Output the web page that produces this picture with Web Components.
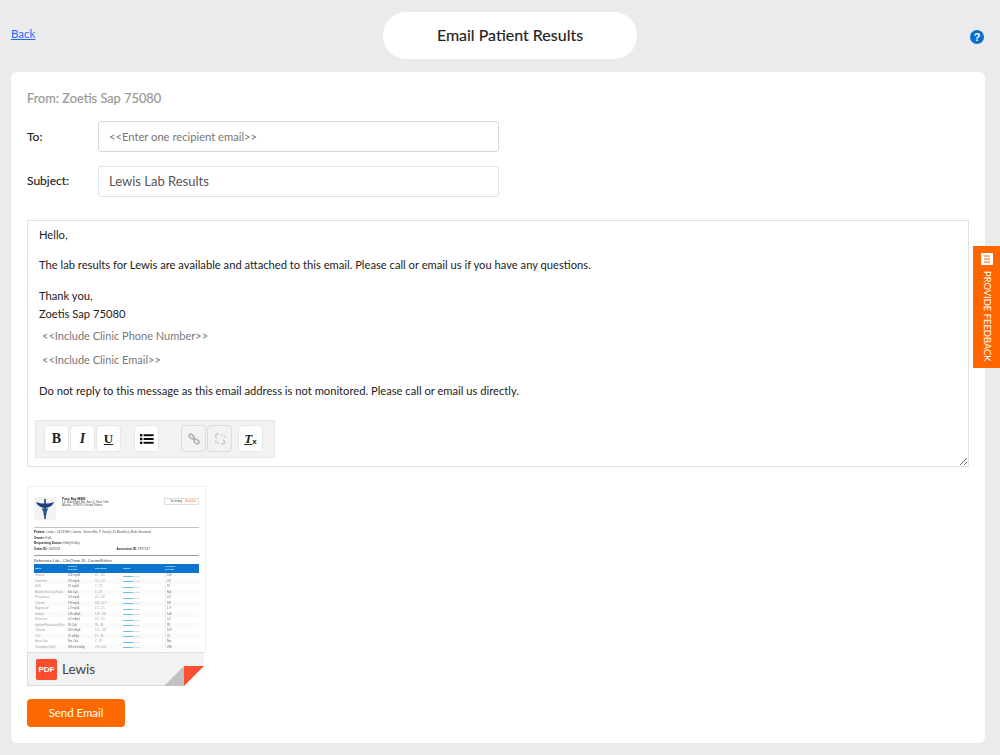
<!DOCTYPE html>
<html lang="en"><head><meta charset="utf-8"><title>Email Patient Results</title>
<style>
html,body{margin:0;padding:0;background:#ebebed;height:755px;overflow:hidden}
body{font:12px/18px Lato,"Open Sans",sans-serif;color:#222}
</style></head><body>
<email-page></email-page>
<script>
function def(name, css, html){
  customElements.define(name, class extends HTMLElement{
    constructor(){super();const s=this.attachShadow({mode:'open'});s.innerHTML='<style>'+css+'</style>'+html;}
  });
}
def('page-header',`
:host{display:grid;grid-template-columns:372px 254px 1fr;height:72px;box-sizing:border-box;padding:12px 16px 13px 11px;align-items:center}
a{color:#1a6dff;font-size:11.500px;text-decoration:underline;margin-top:-3px;justify-self:start}
.t{height:47px;border-radius:23px;background:#fff;display:flex;align-items:center;justify-content:center;font-size:16px;color:#222;-webkit-text-stroke:.15px #222;padding-bottom:2px;box-sizing:border-box}
.r{display:flex;justify-content:flex-end;margin-top:2px}
`,`<a href="#">Back</a><div class="t">Email Patient Results</div><div class="r"><svg width="14" height="14" viewBox="0 0 14 14"><circle cx="7" cy="7" r="7" fill="#0a6ecb"/><text x="7" y="11" text-anchor="middle" font-family="Liberation Sans" font-weight="700" font-size="11" fill="#fff">?</text></svg></div>`);

def('field-row',`
:host{display:flex;align-items:center;height:31px}
.l{width:71px;font-size:12px;color:#222;-webkit-text-stroke:.15px #222;padding-bottom:var(--pb,0)}
.b{width:401px;height:31px;box-sizing:border-box;border:1px solid var(--bc,#d4d7dc);border-radius:3px;padding:0 10px var(--pb,0);display:flex;align-items:center;background:#fff;color:var(--c,#777);font-size:var(--f,11.200px)}
`,`<div class="l"><slot name="label"></slot></div><div class="b"><slot></slot></div>`);

def('tool-btn',`
:host{display:flex;width:25px;height:27px;box-sizing:border-box;align-items:center;justify-content:center;background:#fff;border:1px solid #e6e6e6;border-radius:4px;font:700 14px "Liberation Serif",serif;color:#222}
:host([off]){background:#f2f2f2;border-color:#dcdcdc}
`,`<slot></slot>`);

def('rich-toolbar',`
:host{display:flex;width:240px;height:38px;box-sizing:border-box;background:#f2f2f2;border:1px solid #e6e6e6;padding:4px 0 0 8px;align-items:flex-start}
tool-btn+tool-btn{margin-left:1px}
.g1{margin-left:13px}.g2{margin-left:22px}.g3{margin-left:6px}
`,`<tool-btn>B</tool-btn><tool-btn style="font-style:italic">I</tool-btn><tool-btn style="text-decoration:underline;font-size:13px">U</tool-btn>
<tool-btn class="g1"><svg width="14" height="12" viewBox="0 0 14 12"><g fill="#111"><rect x="0" y="1" width="2.4" height="2.4"/><rect x="0" y="4.8" width="2.4" height="2.4"/><rect x="0" y="8.6" width="2.4" height="2.4"/><rect x="3.6" y="1.2" width="10" height="2"/><rect x="3.6" y="5" width="10" height="2"/><rect x="3.6" y="8.8" width="10" height="2"/></g></svg></tool-btn>
<tool-btn off class="g2"><svg width="12" height="12" viewBox="0 0 12 12" fill="none" stroke="#adadad" stroke-width="1.400"><rect x="0.800" y="1.800" width="5.400" height="3.400" rx="1.700" transform="rotate(40 3.500 3.500)"/><rect x="5.800" y="6.800" width="5.400" height="3.400" rx="1.700" transform="rotate(40 8.500 8.500)"/><path d="M5.200 5.200l1.600 1.600"/></svg></tool-btn>
<tool-btn off><svg width="12" height="12" viewBox="0 0 12 12" fill="none" stroke="#c4c4c4" stroke-width="1.300"><path d="M5 1.200H3.200A1.900 1.900 0 0 0 2.200 4.600l1 .7"/><path d="M7 10.800h1.800a1.900 1.900 0 0 0 1-3.400l-1-.7"/><path d="M8 1v1.800M10 3.500h1.500M.8 8.500h1.800M4 11V9.200"/></svg></tool-btn>
<tool-btn class="g3" style="font-size:13px;font-style:italic"><span style="text-decoration:underline;line-height:1">T</span><span style="font-size:8px;margin-top:6px;font-family:'Liberation Sans';font-style:normal">x</span></tool-btn>`);

def('mail-editor',`
:host{display:block;width:942px;height:247px;box-sizing:border-box;border:1px solid #e2e2e2;padding:5px 11px 0;margin-top:23px;font-size:11.200px;line-height:18px;color:#222;resize:both;overflow:auto;position:relative}
p{margin:0}
.ph{color:#777;padding-left:3px;font-size:11px}
rich-toolbar{margin:20px 0 0 -4px}
`,`<p>Hello,</p>
<p style="margin-top:12px">The lab results for Lewis are available and attached to this email. Please call or email us if you have any questions.</p>
<p style="margin-top:13px">Thank you,</p>
<p>Zoetis Sap 75080</p>
<p class="ph" style="margin-top:4px">&lt;&lt;Include Clinic Phone Number&gt;&gt;</p>
<p class="ph" style="margin-top:6px">&lt;&lt;Include Clinic Email&gt;&gt;</p>
<p style="margin-top:13px">Do not reply to this message as this email address is not monitored. Please call or email us directly.</p>
<rich-toolbar></rich-toolbar>`);

const rows=[['Glucose','108 mg/dL','65 - 120'],['Creatinine','0.9 mg/dL','0.5 - 1.5'],['BUN','19 mg/dL','7 - 27'],['Blood Urea/Creat Ratio','Not Calc','0 - 28'],['Phosphorus','4.3 mg/dL','2.5 - 6.8'],['Calcium','9.8 mg/dL','8.8 - 11.9'],['Magnesium','1.9 mg/dL','1.5 - 2.5'],['Sodium','146 mEq/L','139 - 154'],['Potassium','4.2 mEq/L','3.6 - 5.5'],['Sodium/Potassium Ratio','35 Calc','28 - 38'],['Chloride','109 mEq/L','102 - 120'],['CO2','22 mEq/L','15 - 28'],['Anion Gap','Not Calc','7 - 29'],['Osmolality (Calc)','296 mOsm/kg','270 - 310']];
def('report-thumb',`
:host{display:block;width:179px;height:166px;box-sizing:border-box;border:1px solid #eee;border-bottom:0;padding:0 6px 0 6px;overflow:hidden;font-size:3px;line-height:3.400px;color:#555;background:#fff;font-family:"Liberation Sans",sans-serif}
.top{display:flex;height:39.500px;padding-top:10px;box-sizing:border-box}
.logo{width:22px;height:23px;background:#f3f3f3;display:flex;justify-content:center;align-items:center;margin-right:6px;flex:none}
.ad{flex:1;padding-top:.5px}.ad b{color:#222}
.st{width:35px;height:6.500px;border:1px solid #ddd;display:flex;align-items:center;justify-content:flex-end;gap:3px;padding-right:2px;margin-top:1px;box-sizing:border-box;white-space:nowrap;font-size:2.700px}
.st i{font-style:normal;color:#ff7a30}
.hr{height:1px;background:#c4c4c4}
.i{margin-top:2.100px;font-size:3.100px;white-space:nowrap}.i b{color:#222}
.kv{display:flex}.kv span{width:83px}
.h2{font-size:3.900px;line-height:5px;color:#444;border-top:1px solid #999;margin-top:4px;padding-top:2px}
.hd{display:grid;grid-template-columns:33px 27px 28px 42px 1fr;background:#0a74cf;color:#e4f1fb;height:9px;margin-top:1.500px;padding-left:1px;align-items:center;font-weight:700;line-height:2.800px;font-size:2.400px}
.rw{display:grid;grid-template-columns:33px 27px 28px 42px 1fr;height:5.500px;padding-left:1px;align-items:center;font-size:2.700px;color:#a0a0a0;white-space:nowrap;overflow:hidden}
.rw:nth-child(even){background:#fafafa}
.bar{display:block;width:17px;height:1.300px;background:linear-gradient(90deg,#6cc0ea 0 60%,#ddd 60% 100%)}
.v{color:#666}
.inner{filter:blur(.4px)}
.last{border-left:1px solid #eee;padding-left:1px;height:100%;display:flex;align-items:center}
`,`<div class="inner"><div class="top"><div class="logo"><svg width="20" height="22" viewBox="0 0 20 22"><path d="M10 1v20" stroke="#1f3f78" stroke-width="1.600"/><path d="M1 4c3 1 5 1.500 9 1.500S16 5 19 4c-1 3-4 5.500-9 6C5 9.500 2 7 1 4z" fill="#1f3f78"/><path d="M6.500 10.500h7l-1.800 3-.5 4h-2.400l-.5-4z" fill="#2a4f8e"/></svg></div><div class="ad"><b>Pusic Bay 98983</b><br>10, Blacklight Rd , Ave 3, New York<br>Alaska, 078979, United States</div><div class="st">Yesterday <i>Available</i></div></div>
<div class="hr"></div>
<div class="i" style="margin-top:3.500px"><b>Patient:</b> Lewis - 14Y/DSH, Canine, Terrier Mix, 9 Year(s) 10 Month(s), Male Neutered</div>
<div class="i"><b>Owner:</b> Folk</div>
<div class="i"><b>Requesting Doctor:</b> Holly Kelley</div>
<div class="i kv"><span><b>Order ID:</b> 1637053</span><span><b>Accession ID:</b> 9797437</span></div>
<div class="h2">Reference Lab - ClinChem 20, Canine/Feline</div>
<div class="hd"><span>Units</span><span>Current<br>01/11/20</span><span>Ref Range</span><span>Range</span><span>Previous<br>01/11/20</span></div>
<div>${rows.map(r=>`<div class="rw"><span>${r[0]}</span><span class="v">${r[1]}</span><span>${r[2]}</span><span><i class="bar"></i></span><span class="last v">${r[1].split(' ')[0]}</span></div>`).join('')}</div></div>`);

def('pdf-footer',`
:host{display:block;width:177px;height:34px;box-sizing:border-box;background:#f2f2f2;border:1px solid #dcdcdc;border-right:0;position:relative}
.w{display:flex;align-items:center;height:100%;padding-left:8px;gap:5px;font-size:13.500px;color:#444}
.pdf{width:21px;height:21px;border-radius:2px;background:#fb4c2f;color:#fff;font:700 8px/21px "Liberation Sans",sans-serif;text-align:center;box-shadow:0 0 1px #aaa}
svg{position:absolute;right:0;bottom:-1px}
`,`<div class="w"><div class="pdf">PDF</div><span>Lewis</span></div><svg width="40" height="20" viewBox="0 0 40 20"><path d="M20 0V20H0z" fill="#c2c2c2"/><path d="M20 20H40V0z" fill="#fff"/><path d="M20 0H40L20 20z" fill="#fc5130"/></svg>`);

def('send-btn',`
:host{display:flex;width:98px;height:28px;align-items:center;justify-content:center;background:#ff6a00;color:#fff;border-radius:4px;font-size:11.400px;margin-top:13px}
`,`<slot></slot>`);

def('feedback-tab',`
:host{position:fixed;left:973px;top:246px;width:27px;height:122px;background:#ff6600;color:#fff;display:flex;flex-direction:column;align-items:center;padding-top:7px;box-sizing:border-box;gap:6px}
span{writing-mode:vertical-rl;line-height:12px;white-space:nowrap;font-size:9.400px}
`,`<svg width="12" height="12" viewBox="0 0 12 12"><rect width="12" height="12" rx="1" fill="#fff"/><path d="M3 3h6M3 6h6M3 9h6" stroke="#ff6600" stroke-width="1.200"/></svg><span>PROVIDE FEEDBACK</span>`);

def('email-card',`
:host{display:block;margin:0 15px 0 11px;height:671px;box-sizing:border-box;background:#fff;border-radius:6px;padding:18px 16px 0}
.from{font-size:12.800px;color:#9a9a9a;-webkit-text-stroke:.2px #9a9a9a;line-height:17px;margin-bottom:14px}
field-row+field-row{margin-top:14px}
.att{margin-top:19px}
`,`<div class="from">From: Zoetis Sap 75080</div>
<field-row><span slot="label">To:</span>&lt;&lt;Enter one recipient email&gt;&gt;</field-row>
<field-row style="--c:#555;--f:13px;--bc:#dfe3e9;--pb:2px"><span slot="label">Subject:</span>Lewis Lab Results</field-row>
<mail-editor></mail-editor>
<div class="att"><report-thumb></report-thumb><pdf-footer></pdf-footer></div>
<send-btn>Send Email</send-btn>`);

def('email-page',`:host{display:block}`,`<page-header></page-header><email-card></email-card><feedback-tab></feedback-tab>`);
</script>
</body></html>
